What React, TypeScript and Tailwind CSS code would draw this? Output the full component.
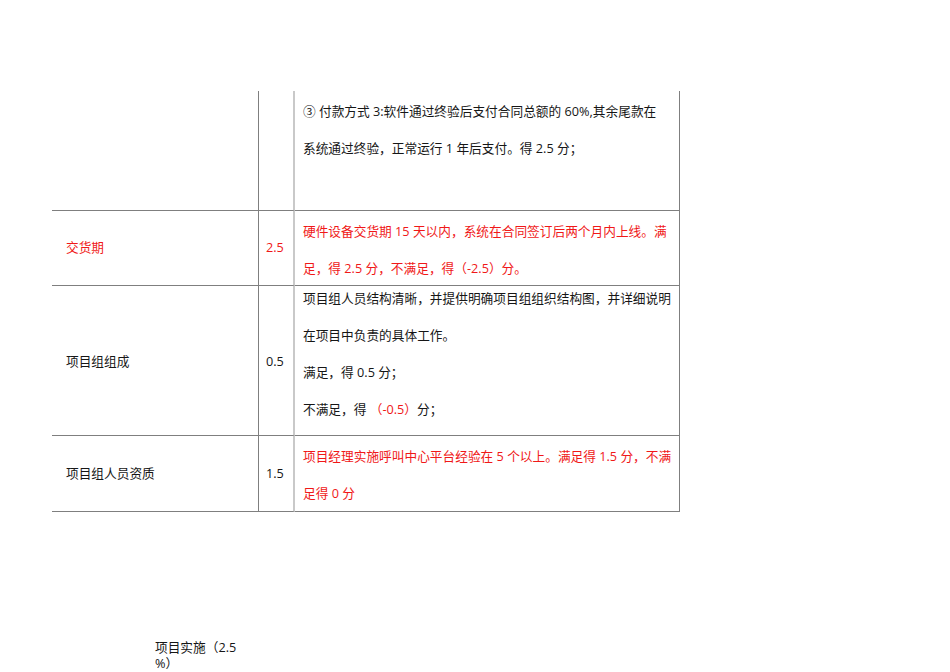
import React from "react";

const font = "font-['Open_Sans','Noto_Sans_CJK_SC',sans-serif]";

export default function App() {
  const red = "text-[#f01818]";
  return (
    <div className={`w-[950px] h-[672px] bg-white overflow-hidden ${font} text-[12.7px] text-[#161616]`}>
      <div className="pt-[91px] pl-[52px]">
        <div className="grid grid-cols-[207px_36px_385px] w-[628px]">
          {/* Row 1 */}
          <div className="h-[120px] border-r border-b border-[#7f7f7f]" />
          <div className="h-[120px] border-b border-[#7f7f7f] border-r-2 border-r-[#c9c9c9]" />
          <div className="h-[120px] border-b border-r border-[#7f7f7f] pl-[8px] pt-[2px] leading-[37px] whitespace-nowrap">
            <div>③ 付款方式 3:软件通过终验后支付合同总额的 60%,其余尾款在</div>
            <div>系统通过终验，正常运行 1 年后支付。得 2.5 分；</div>
          </div>

          {/* Row 2 */}
          <div className={`h-[75px] border-r border-b border-[#7f7f7f] pl-[14px] flex items-center ${red}`}>交货期</div>
          <div className={`h-[75px] border-b border-[#7f7f7f] border-r-2 border-r-[#c9c9c9] pl-[7px] flex items-center ${red}`}>2.5</div>
          <div className={`h-[75px] border-b border-r border-[#7f7f7f] pl-[8px] pt-[2px] leading-[37px] whitespace-nowrap ${red}`}>
            <div>硬件设备交货期 15 天以内，系统在合同签订后两个月内上线。满</div>
            <div>足，得 2.5 分，不满足，得（-2.5）分。</div>
          </div>

          {/* Row 3 */}
          <div className="h-[150px] border-r border-b border-[#7f7f7f] pl-[14px] flex items-center pt-[2px]">项目组组成</div>
          <div className="h-[150px] border-b border-[#7f7f7f] border-r-2 border-r-[#c9c9c9] pl-[7px] flex items-center pt-[2px]">0.5</div>
          <div className="h-[150px] border-b border-r border-[#7f7f7f] pl-[8px] leading-[37px] whitespace-nowrap">
            <div className="-mt-[6px]">
              <div>项目组人员结构清晰，并提供明确项目组组织结构图，并详细说明</div>
              <div>在项目中负责的具体工作。</div>
              <div>满足，得 0.5 分；</div>
              <div>
                不满足，得 <span className={red}>（-0.5）</span>分；
              </div>
            </div>
          </div>

          {/* Row 4 */}
          <div className="h-[76px] border-r border-b border-[#7f7f7f] pl-[14px] flex items-center">项目组人员资质</div>
          <div className="h-[76px] border-b border-[#7f7f7f] border-r-2 border-r-[#c9c9c9] pl-[7px] flex items-center">1.5</div>
          <div className={`h-[76px] border-b border-r border-[#7f7f7f] pl-[8px] pt-[2px] leading-[37px] whitespace-nowrap ${red}`}>
            <div>项目经理实施呼叫中心平台经验在 5 个以上。满足得 1.5 分，不满</div>
            <div>足得 0 分</div>
          </div>
        </div>

        <div className="mt-[127px] ml-[103px] leading-[16px] whitespace-nowrap">
          <div>项目实施（2.5</div>
          <div>%）</div>
        </div>
      </div>
    </div>
  );
}
